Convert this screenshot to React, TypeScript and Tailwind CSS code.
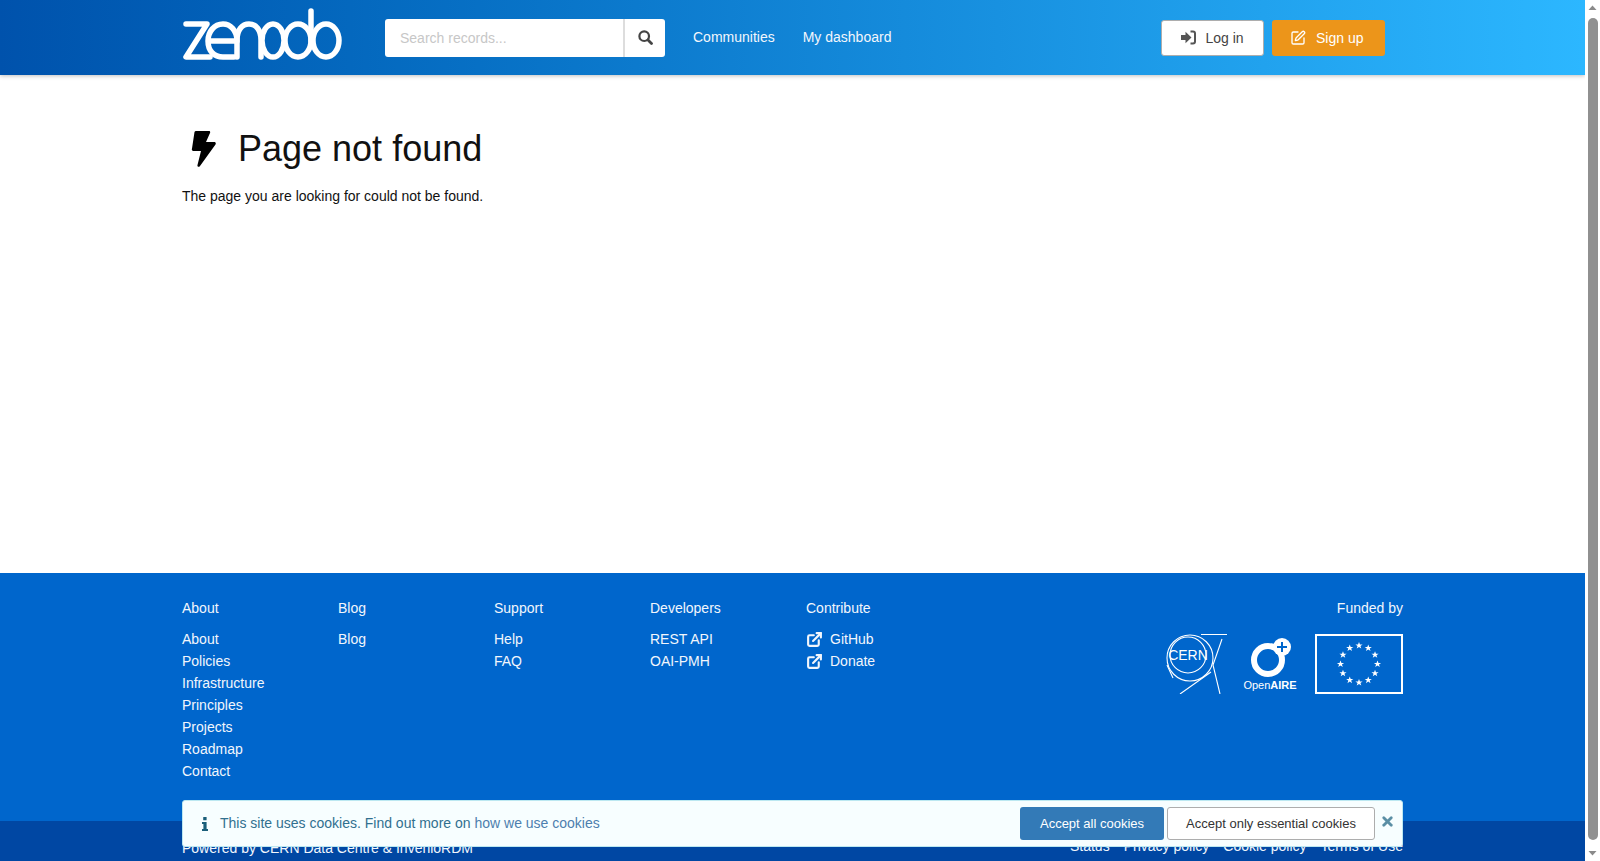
import { Edit, ExternalLink, X } from "lucide-react";

const columns = [
  { title: "About", links: ["About", "Policies", "Infrastructure", "Principles", "Projects", "Roadmap", "Contact"] },
  { title: "Blog", links: ["Blog"] },
  { title: "Support", links: ["Help", "FAQ"] },
  { title: "Developers", links: ["REST API", "OAI-PMH"] },
];

function ZenodoLogo() {
  return (
    <svg width="160" height="54" viewBox="0 0 160 54" fill="none" stroke="white" strokeWidth="5.5" strokeLinecap="round" strokeLinejoin="round">
      <path d="M4 16 H25 L4 49 H28" />
      <path d="M28 33 H55 C55 22 48 16 41 16 C32 16 26 24 26 33 C26 43 32 49 41 49 H52" />
      <path d="M55 49 V32 C55 22 60 16 67 16 C74 16 79 22 79 32 V49" />
      <ellipse cx="91" cy="32.500" rx="11" ry="16.500" />
      <ellipse cx="116" cy="32.500" rx="13" ry="16.500" />
      <path d="M129 3 V33" />
      <ellipse cx="144" cy="32.500" rx="13" ry="16.500" />
    </svg>
  );
}

function SearchIcon() {
  return (
    <svg width="15" height="15" viewBox="0 0 15 15" fill="none" stroke="#444" strokeWidth="2.2" strokeLinecap="round">
      <circle cx="6.200" cy="6.200" r="4.800" />
      <path d="M10 10 L13.500 13.500" strokeWidth="2.800" />
    </svg>
  );
}

function SignInIcon() {
  return (
    <svg width="15" height="15" viewBox="0 0 15 15" fill="#555">
      <path d="M0 5 H4.500 V1.800 L10.500 7.500 L4.500 13.200 V10 H0 Z" />
      <path d="M9.500 1.500 H12 Q14 1.500 14 3.500 V11.500 Q14 13.500 12 13.500 H9.500" fill="none" stroke="#555" strokeWidth="2" />
    </svg>
  );
}

function BoltIcon() {
  return (
    <svg width="26" height="36" viewBox="0 0 26 36" className="ml-[9px]" fill="black">
      <path d="M5 0 H18 C19 0 19.500 1 19 2 L15 11 H23 C25 11 25 12.500 24.500 13.500 L9 35 C8 36.500 6 36 6.500 34 L10 20 H3 C1 20 0.500 19 1 17.500 L3.500 1 C3.700 0.400 4.200 0 5 0 Z" />
    </svg>
  );
}

function InfoGlyph() {
  return (
    <svg width="6" height="14" viewBox="0 0 6 14" fill="#1b5f7a">
      <rect x="1.200" y="0" width="3.400" height="3.200" rx="0.500" />
      <path d="M0 5 H4.600 V12 H6 V14 H0 V12 H1.400 V7 H0 Z" />
    </svg>
  );
}

function CernLogo() {
  return (
    <svg width="61" height="60" viewBox="0 0 61 60" fill="none" stroke="white" strokeWidth="1.100">
      <circle cx="24" cy="24" r="23" />
      <circle cx="22" cy="21" r="18" />
      <path d="M35 0.500 H61 M56 5 L47 31 L54 60 M1 31 L7 44 M14 60 L45 38" />
      <text x="22" y="26" textAnchor="middle" fill="white" stroke="none" fontSize="14" fontFamily="Liberation Sans">CERN</text>
    </svg>
  );
}

function OpenAireLogo() {
  return (
    <svg width="54" height="60" viewBox="0 0 54 60" fill="none">
      <circle cx="25" cy="26" r="14" stroke="white" strokeWidth="6" />
      <circle cx="39" cy="13" r="9" fill="white" />
      <path d="M39 8 V18 M34 13 H44" stroke="#0066cc" strokeWidth="2" />
      <text x="27" y="55" textAnchor="middle" fill="white" fontSize="11" fontFamily="Liberation Sans">Open<tspan fontWeight="700">AIRE</tspan></text>
    </svg>
  );
}

function EuFlag() {
  const stars = Array.from({ length: 12 }, (_, i) => {
    const a = (i * Math.PI) / 6;
    return { x: 44 + 18.500 * Math.sin(a), y: 30 - 18.500 * Math.cos(a) };
  });
  return (
    <svg width="88" height="60" viewBox="0 0 88 60" fill="none">
      <rect x="1" y="1" width="86" height="58" stroke="white" strokeWidth="2" />
      {stars.map((s, i) => (
        <path
          key={i}
          fill="white"
          transform={`translate(${s.x} ${s.y}) scale(1.200)`}
          d="M0 -3 L0.800 -0.900 L3 -0.900 L1.200 0.400 L1.900 2.600 L0 1.300 L-1.900 2.600 L-1.200 0.400 L-3 -0.900 L-0.800 -0.900 Z"
        />
      ))}
    </svg>
  );
}

function Scrollbar() {
  return (
    <aside className="flex h-full w-[15px] shrink-0 flex-col items-center bg-white">
      <svg width="15" height="15" viewBox="0 0 15 15" fill="#8a8a8a" className="shrink-0">
        <path d="M3.500 10 L7.500 5.500 L11.500 10 Z" />
      </svg>
      <div className="mb-[6px] mt-[3px] w-[10px] flex-1 rounded-[5px] bg-[#909090]" />
      <svg width="15" height="15" viewBox="0 0 15 15" fill="#8a8a8a" className="shrink-0">
        <path d="M3.500 5 L7.500 9.500 L11.500 5 Z" />
      </svg>
    </aside>
  );
}

export default function App() {
  return (
    <div className="relative flex h-[861px] overflow-hidden font-['Liberation_Sans',sans-serif] text-[14px] leading-[20px] text-[#111]">
      <div className="h-full min-w-0 flex-1 overflow-hidden">
        <header className="relative flex h-[75px] items-center bg-gradient-to-r from-[#0052ac] to-[#2cb7ff] pl-[182px] shadow-[0_1px_4px_rgba(0,0,0,0.25)]">
          <div className="mb-[5px]"><ZenodoLogo /></div>
          <div className="ml-[43px] flex h-[38px] w-[280px] rounded-[3px] bg-white">
            <span className="flex flex-1 items-center pl-[15px] text-[#c7c7c7]">Search records...</span>
            <span className="flex w-[42px] items-center justify-center border-l-2 border-[#dddddd]">
              <SearchIcon />
            </span>
          </div>
          <nav className="mb-[2px] ml-[28px] flex gap-[28px] text-[#f2f6fc]">
            <span>Communities</span>
            <span>My dashboard</span>
          </nav>
          <div className="ml-auto mr-[200px] flex gap-[8px]">
            <span className="flex h-[36px] w-[103px] items-center justify-center gap-[9px] rounded-[3px] border border-[#adadad] bg-white text-[#444]">
              <SignInIcon />
              Log in
            </span>
            <span className="flex h-[36px] w-[113px] items-center gap-[10px] rounded-[3px] bg-[#ec951a] pl-[18px] text-white">
              <Edit size={16} />
              Sign up
            </span>
          </div>
        </header>

        <main className="h-[498px] pl-[182px] pt-[54px]">
          <h1 className="flex items-center text-[36px] leading-[40px]">
            <BoltIcon />
            <span className="ml-[21px]">Page not found</span>
          </h1>
          <p className="mt-[17px]">The page you are looking for could not be found.</p>
        </main>

        <footer className="bg-[#0066cc] text-[#f2f6fc]">
          <div className="flex h-[248px] px-[182px] pt-[25px]">
            {columns.map((c) => (
              <div key={c.title} className="w-[156px]">
                <div className="mb-[11px]">{c.title}</div>
                {c.links.map((l) => (
                  <div key={l} className="mb-[2px]">{l}</div>
                ))}
              </div>
            ))}
            <div className="w-[156px]">
              <div className="mb-[11px]">Contribute</div>
              {["GitHub", "Donate"].map((l) => (
                <div key={l} className="mb-[2px] flex items-center gap-[7px]">
                  <ExternalLink size={17} strokeWidth={3} />
                  {l}
                </div>
              ))}
            </div>
            <div className="ml-auto flex flex-col items-end">
              <div className="mb-[16px]">Funded by</div>
              <div className="flex items-start">
                <CernLogo />
                <div className="ml-[16px]"><OpenAireLogo /></div>
                <div className="ml-[18px]"><EuFlag /></div>
              </div>
            </div>
          </div>
          <div className="flex h-[49px] items-start justify-between bg-[#0047a3] px-[182px] pt-[17px]">
            <span>Powered by CERN Data Centre &amp; InvenioRDM</span>
            <span className="-mt-[2px] flex gap-[14px]">
              <span>Status</span>
              <span>Privacy policy</span>
              <span>Cookie policy</span>
              <span>Terms of Use</span>
            </span>
          </div>
        </footer>
      </div>
      <Scrollbar />

      <div className="absolute left-[182px] top-[800px] flex h-[47px] w-[1221px] items-center rounded-[3px] border border-[#bce8f1] bg-[#f7feff] pl-[19px] text-[#31708f]">
        <InfoGlyph />
        <span className="mb-[1px] ml-[12px]">This site uses cookies. Find out more on <span className="text-[#4d7fae]">how we use cookies</span></span>
        <span className="ml-auto flex h-[33px] w-[144px] items-center justify-center rounded-[3px] bg-[#337ab7] text-[13px] text-white">Accept all cookies</span>
        <span className="ml-[3px] flex h-[33px] w-[208px] items-center justify-center rounded-[3px] border border-[#adadad] bg-white text-[13px] text-[#333]">Accept only essential cookies</span>
        <X size={15} strokeWidth={4.5} className="mb-[5px] ml-[5px] mr-[7px] text-[#5b8fa5]" />
      </div>
    </div>
  );
}
